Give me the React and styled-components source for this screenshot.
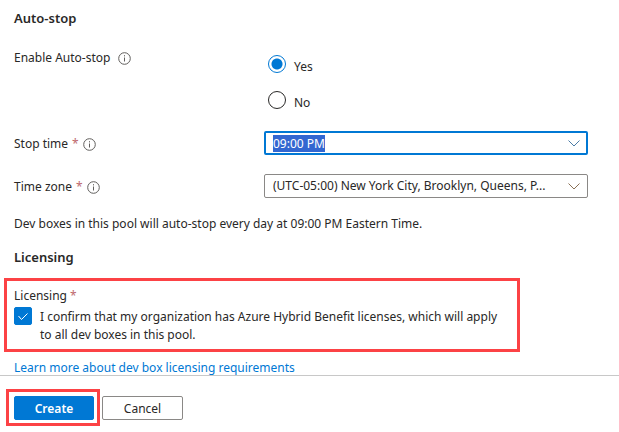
import React, { useEffect, useRef } from "react";
import styled, { createGlobalStyle } from "styled-components";

export default function App() {
  const stopTime = useRef(null);

  useEffect(() => {
    stopTime.current.focus();
    stopTime.current.select();
  }, []);

  return (
    <>
      <GlobalStyle />
      <Form onSubmit={(e) => e.preventDefault()}>
        <Content>
          <Heading>Auto-stop</Heading>
          <RadioRow>
            <Label as="span" id="auto-stop">
              Enable Auto-stop <InfoIcon />
            </Label>
            <RadioGroup role="radiogroup" aria-labelledby="auto-stop">
              <RadioLabel>
                <Radio type="radio" name="autostop" defaultChecked />
                <span>Yes</span>
              </RadioLabel>
              <RadioLabel>
                <Radio type="radio" name="autostop" />
                <span>No</span>
              </RadioLabel>
            </RadioGroup>
          </RadioRow>
          <Row>
            <FieldLabel htmlFor="stop-time">
              Stop time <Required>*</Required> <InfoIcon />
            </FieldLabel>
            <Field>
              <TextBox
                id="stop-time"
                role="combobox"
                aria-expanded="false"
                ref={stopTime}
                defaultValue="09:00 PM"
              />
              <Chevron color="#4a7ba6" />
            </Field>
          </Row>
          <Row>
            <FieldLabel htmlFor="time-zone">
              Time zone <Required>*</Required> <InfoIcon />
            </FieldLabel>
            <Field>
              <Select id="time-zone">
                <option>(UTC-05:00) New York City, Brooklyn, Queens, P...</option>
              </Select>
              <Chevron color="#8a7055" />
            </Field>
          </Row>
          <Note>
            Dev boxes in this pool will auto-stop every day at 09:00 PM Eastern
            Time.
          </Note>
          <Heading>Licensing</Heading>
          <Callout>
            <Caption id="licensing">
              Licensing <Required>*</Required>
            </Caption>
            <CheckLabel>
              <Checkbox>
                <input
                  type="checkbox"
                  defaultChecked
                  aria-describedby="licensing"
                />
                <svg viewBox="0 0 18 18" aria-hidden="true">
                  <path d="M4.500 9l3 3.500 6-6" />
                </svg>
              </Checkbox>
              <CheckText>
                I confirm that my organization has Azure Hybrid Benefit
                licenses, which will apply to all dev boxes in this pool.
              </CheckText>
            </CheckLabel>
          </Callout>
          <Link href="#licensing">
            Learn more about dev box licensing requirements
          </Link>
        </Content>
        <Footer>
          <ButtonCallout>
            <Button type="submit" $primary>
              Create
            </Button>
          </ButtonCallout>
          <Button type="button">Cancel</Button>
        </Footer>
      </Form>
    </>
  );
}

function InfoIcon() {
  return (
    <Info viewBox="0 0 13 13" aria-hidden="true">
      <circle cx="6.5" cy="6.5" r="5.8" />
      <path d="M6.5 5.5v4M6.5 3.2v1.2" />
    </Info>
  );
}

function Chevron({ color }) {
  return (
    <Arrow viewBox="0 0 12 7" stroke={color} aria-hidden="true">
      <path d="M.5 .5L6 6 11.5 .5" />
    </Arrow>
  );
}

const GlobalStyle = createGlobalStyle`
  * {
    box-sizing: border-box;
  }
  body {
    margin: 0;
    background: #fff;
    color: #292827;
    font-family: "Noto Sans", "Open Sans", sans-serif;
    font-size: 12px;
    line-height: 20px;
  }
  input, select, button {
    margin: 0;
    font: inherit;
    color: inherit;
  }
`;

const Form = styled.form`
  width: 100%;
`;

const Content = styled.div`
  padding: 8px 14px 0;
`;

const Heading = styled.h2`
  margin: 0;
  font-size: 13px;
  font-weight: 600;
  line-height: 20px;
`;

const Row = styled.div`
  display: grid;
  grid-template-columns: 250px minmax(0, 324px);
  align-items: center;
  margin-top: 19px;
`;

const RadioRow = styled(Row)`
  align-items: start;
  margin-top: 20px;
  margin-bottom: 20px;
`;

const Label = styled.label`
  display: flex;
  align-items: center;
  gap: 8px;
`;

const FieldLabel = styled(Label)`
  gap: 4px;
  padding-top: 2px;
`;

const Required = styled.span`
  color: #a4262c;
  opacity: 0.7;
`;

const Info = styled.svg`
  width: 13px;
  height: 13px;
  fill: none;
  stroke: #605e5c;
`;

const RadioGroup = styled.div`
  display: flex;
  flex-direction: column;
  align-items: flex-start;
  gap: 16px;
  padding: 7px 4px 0;
`;

const RadioLabel = styled.label`
  display: flex;
  align-items: flex-start;
  gap: 8px;
  height: 20px;

  span {
    padding-top: 2px;
  }
`;

const Radio = styled.input`
  appearance: none;
  width: 18px;
  height: 18px;
  border: 1px solid #292827;
  border-radius: 50%;

  &:checked {
    border-color: #0078d4;
    background: radial-gradient(circle, #0078d4 5px, transparent 6px);
  }
`;

const Field = styled.div`
  position: relative;
`;

const TextBox = styled.input`
  display: block;
  width: 100%;
  height: 24px;
  padding: 0 32px 0 7px;
  border: 2px solid #0078d4;
  border-radius: 2px;
  background: #fff;
  outline: none;

  &::selection {
    background: #3367d1;
    color: #fff;
  }
`;

const Select = styled.select`
  appearance: none;
  display: block;
  width: 100%;
  height: 24px;
  padding: 0 32px 0 8px;
  border: 1px solid #8a8886;
  border-radius: 2px;
  background: #fff;
  text-overflow: ellipsis;
`;

const Arrow = styled.svg`
  position: absolute;
  top: 9px;
  right: 8px;
  width: 12px;
  height: 7px;
  fill: none;
  pointer-events: none;
`;

const Note = styled.p`
  margin: 16px 0 13px;
`;

const Callout = styled.div`
  max-width: 516px;
  margin: 11px -10px 9px;
  padding: 4px 10px 3px 7px;
  border: 3px solid #fc4245;
`;

const Caption = styled.div`
  line-height: 22px;
`;

const CheckLabel = styled.label`
  display: flex;
  align-items: flex-start;
  gap: 8px;
  line-height: 18px;
`;

const CheckText = styled.span`
  padding: 1px 0 2px;
`;

const Checkbox = styled.span`
  position: relative;
  flex: none;
  width: 18px;
  height: 18px;

  input {
    appearance: none;
    display: block;
    width: 18px;
    height: 18px;
    border: 1px solid #292827;
    border-radius: 2px;
  }
  input:checked {
    border-color: #0078d4;
    background: #0078d4;
  }
  svg {
    position: absolute;
    inset: 0;
    fill: none;
    stroke: #fff;
  }
`;

const Link = styled.a`
  display: block;
  line-height: 14px;
  color: #0078d4;
  text-decoration: none;
`;

const Footer = styled.footer`
  display: flex;
  align-items: center;
  gap: 2px;
  padding: 13px 6px 6px;
  border-top: 1px solid #c8c8c8;
`;

const ButtonCallout = styled.div`
  padding: 4px 3px 3px 5px;
  border: 3px solid #fc4245;
`;

const Button = styled.button`
  display: block;
  width: ${(props) => (props.$primary ? "80px" : "81px")};
  height: 24px;
  padding: 2px 0 0;
  border: 1px solid ${(props) => (props.$primary ? "#0078d4" : "#8a8886")};
  border-radius: 2px;
  background: ${(props) => (props.$primary ? "#0078d4" : "#fff")};
  color: ${(props) => (props.$primary ? "#fff" : "#292827")};
  font-weight: ${(props) => (props.$primary ? 600 : 400)};
`;
